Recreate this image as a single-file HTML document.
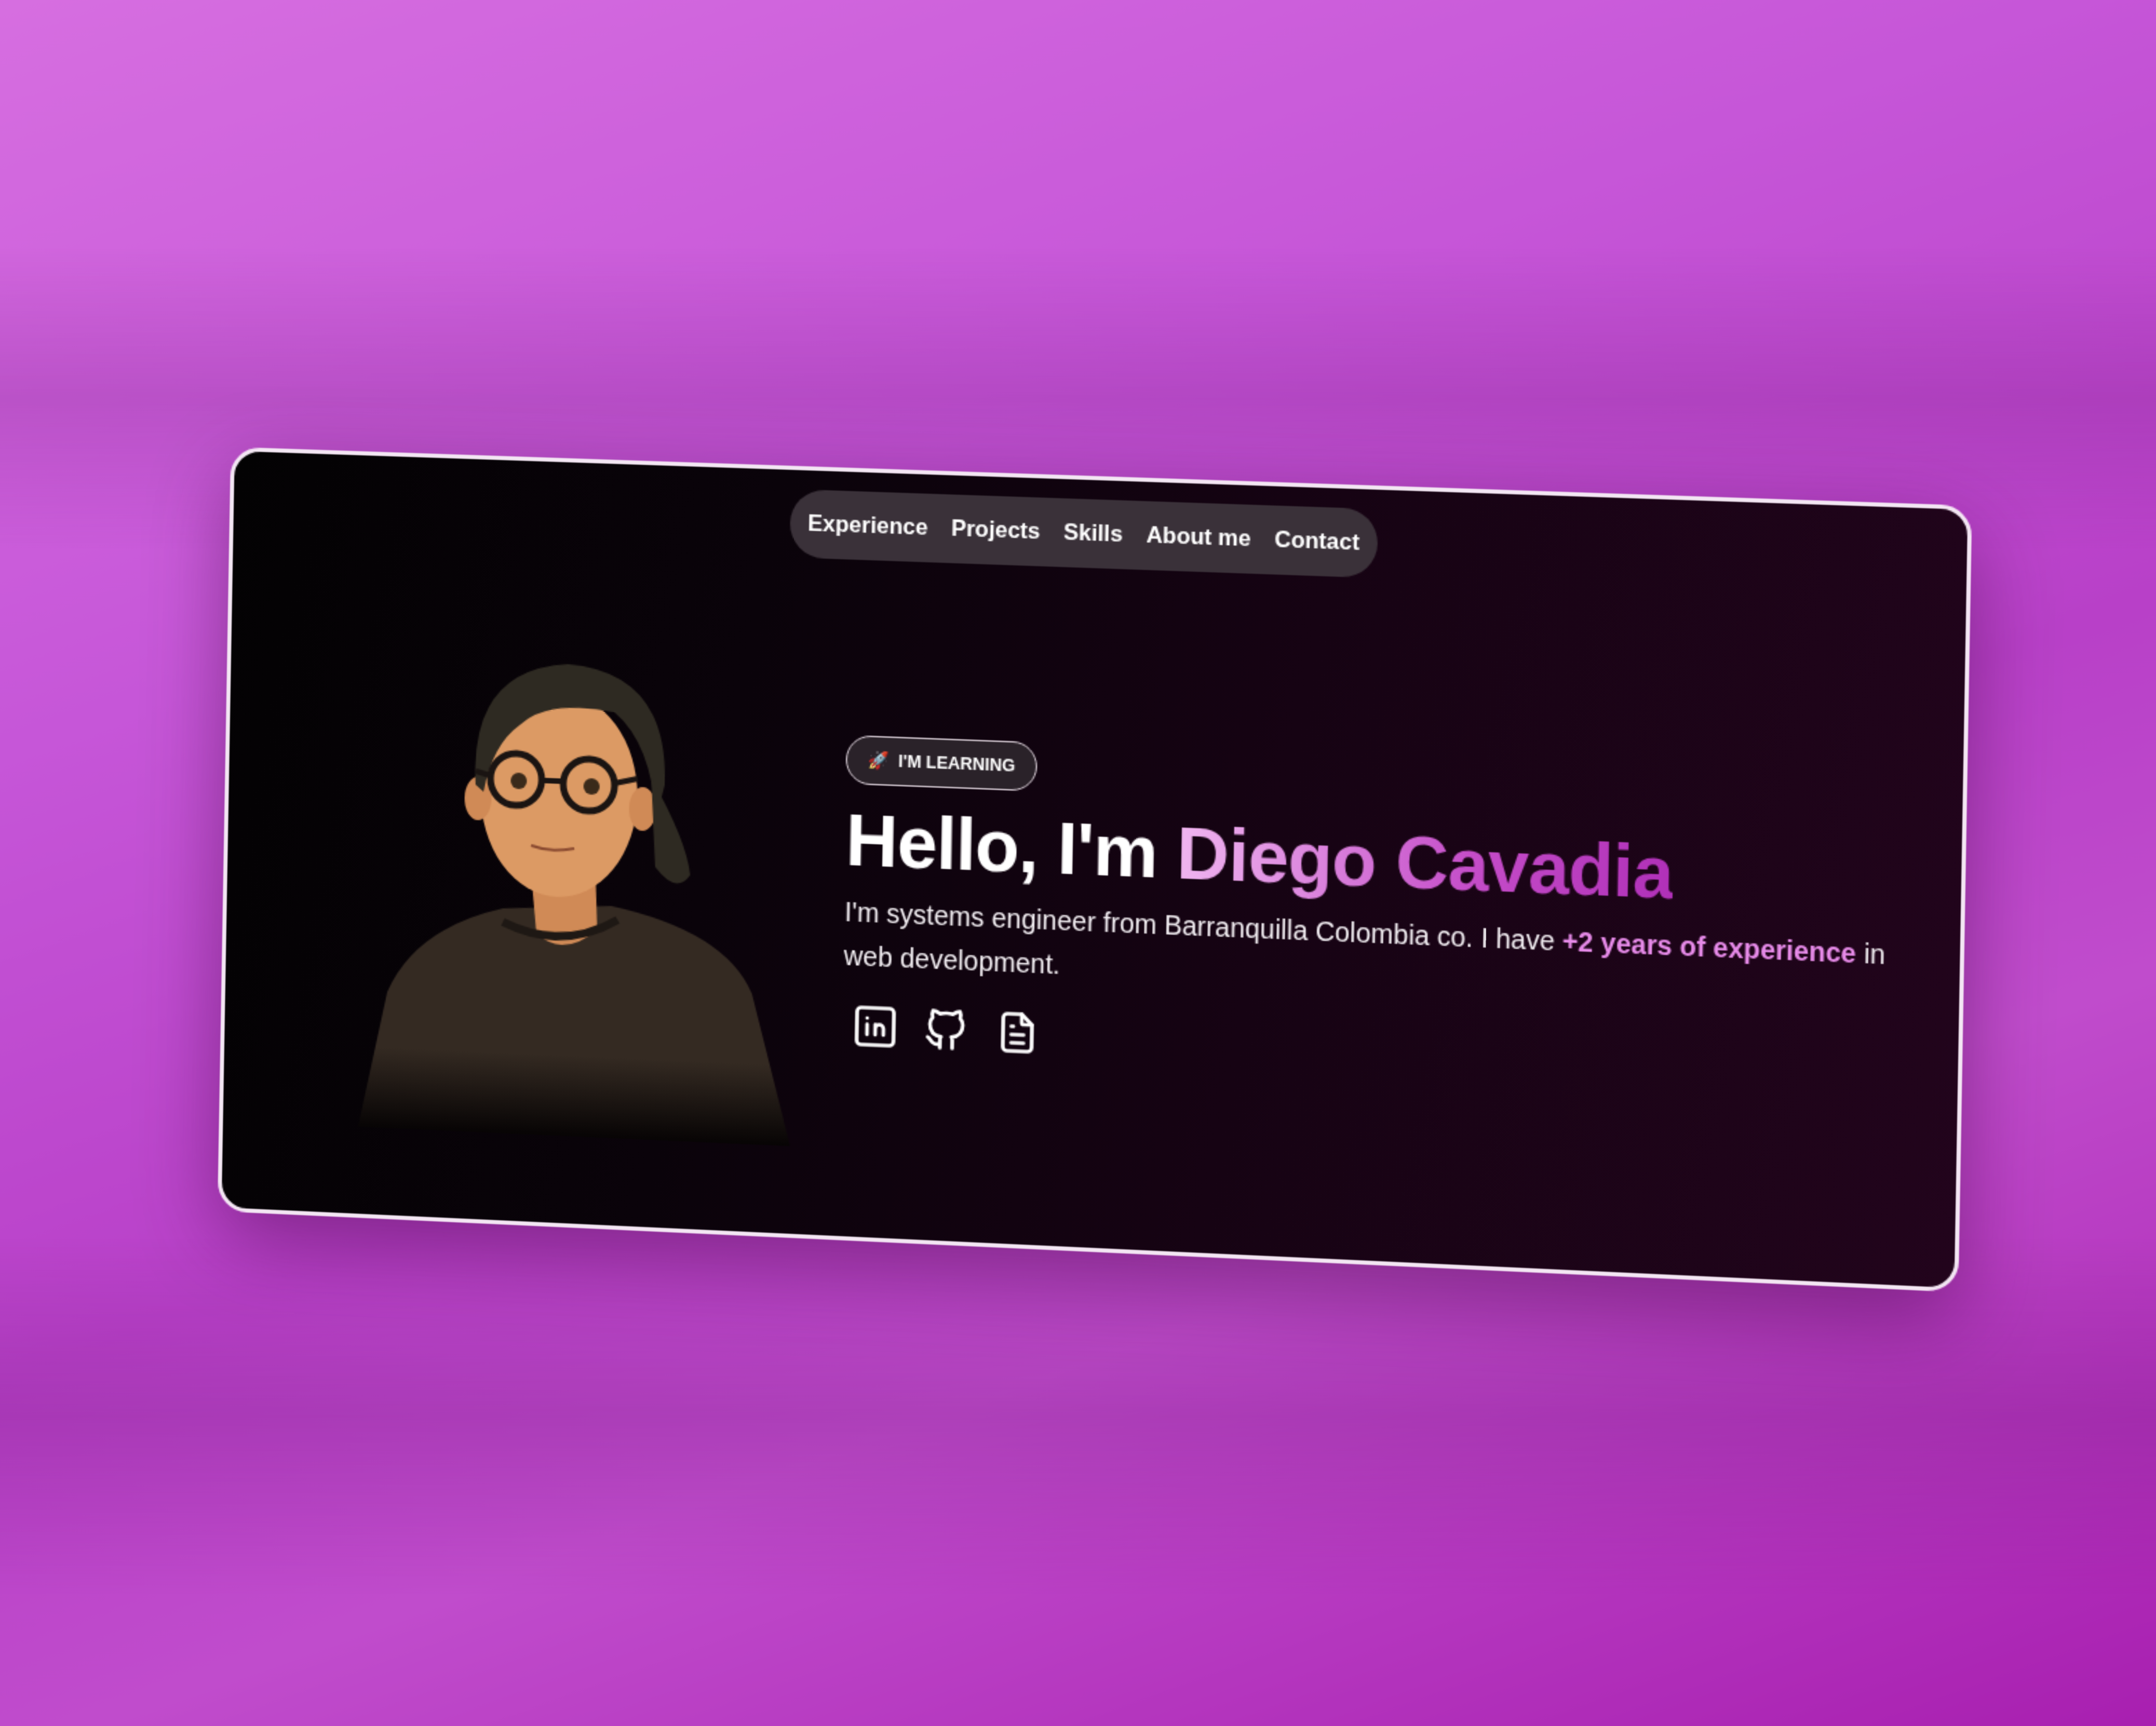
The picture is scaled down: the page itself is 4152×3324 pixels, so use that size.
<!DOCTYPE html>
<html><head><meta charset="utf-8">
<style>
html,body{margin:0;padding:0;width:4152px;height:3324px;overflow:hidden}
body{background:linear-gradient(160deg,#d66ee0 0%,#c656d8 30%,#b840c8 55%,#c04ccc 70%,#a81fb0 100%)}
#wrap{position:absolute;left:0;top:0;width:1568px;height:1255px;transform:scale(2.648);transform-origin:0 0;font-family:"Liberation Sans",sans-serif}
.band{position:absolute;left:0;width:1568px}
#card{position:absolute;left:153px;top:346px;width:1268px;height:564px;transform:perspective(2000px) rotate(1deg) skewY(1.3deg) rotateY(-2.6deg);border:3px solid #f3e6f3;border-radius:22px;box-sizing:border-box;overflow:hidden;
background:linear-gradient(100deg,#030203 0%,#0a030a 30%,#160313 60%,#22041c 100%);box-shadow:0 20px 60px rgba(60,0,60,.45)}
#nav{position:absolute;left:413px;top:14px;width:428px;height:50px;border-radius:25px;background:#3a3139;color:#fff;font-size:16.5px;font-weight:bold;display:flex;align-items:center;justify-content:center;gap:17px;white-space:nowrap}
#badge{position:absolute;left:457px;top:192px;width:140px;height:36px;border-radius:18px;border:1.5px solid #d8cdd6;background:#2a2229;color:#fff;font-size:12.5px;font-weight:bold;display:flex;align-items:center;justify-content:center;box-sizing:border-box}
#h{position:absolute;left:458px;top:239px;font-size:53px;font-weight:bold;color:#fff;white-space:nowrap;letter-spacing:-0.6px}
#p{position:absolute;left:458px;top:306px;width:760px;font-size:19.5px;line-height:32px;color:#f2eef2}
.icons{position:absolute;left:464px;top:386px;display:flex;gap:16px}
</style></head><body>
<div id="wrap">
<div class="band" style="top:180px;height:220px;background:linear-gradient(180deg,rgba(120,30,130,0),rgba(120,30,130,.22),rgba(120,30,130,0))"></div>
<div class="band" style="top:900px;height:260px;background:linear-gradient(180deg,rgba(120,30,130,0),rgba(120,30,130,.25),rgba(120,30,130,0))"></div>
<div id="card">
 <div id="nav"><span>Experience</span><span>Projects</span><span>Skills</span><span>About me</span><span>Contact</span></div>
 <svg style="position:absolute;left:86px;top:134px" width="350" height="370" viewBox="0 0 350 370">
  <defs><linearGradient id="fade" x1="0" y1="0" x2="0" y2="1"><stop offset="0.65" stop-color="#342a22"/><stop offset="1" stop-color="#070404"/></linearGradient></defs>
  <path d="M15 360 L35 260 Q55 212 120 195 L200 190 Q285 205 305 250 L335 360 Z" fill="url(#fade)"/>
  <path d="M140 165 L145 212 Q165 230 190 208 L188 165 Z" fill="#d08a56"/>
  <path d="M120 205 Q165 225 205 200" stroke="#1e1814" stroke-width="6" fill="none"/>
  <ellipse cx="160" cy="110" rx="58" ry="75" fill="#dc9a64"/>
  <ellipse cx="100" cy="115" rx="10" ry="16" fill="#d08a56"/>
  <ellipse cx="222" cy="118" rx="10" ry="16" fill="#d08a56"/>
  <path d="M98 105 Q92 20 165 14 Q240 18 238 100 L232 125 Q228 70 200 48 Q150 40 130 60 Q110 75 104 110 Z" fill="#2e2a22"/>
  <path d="M228 95 Q255 140 258 165 Q248 180 232 160 Z" fill="#2e2a22"/>
  <circle cx="128" cy="100" r="19" fill="none" stroke="#1a1412" stroke-width="5"/>
  <circle cx="182" cy="102" r="19" fill="none" stroke="#1a1412" stroke-width="5"/>
  <path d="M147 100 L163 100 M109 98 L98 95 M201 100 L218 96" stroke="#1a1412" stroke-width="4"/>
  <circle cx="130" cy="101" r="6" fill="#3a2a1a"/><circle cx="184" cy="103" r="6" fill="#3a2a1a"/>
  <path d="M140 148 Q155 153 172 149" stroke="#8a4a30" stroke-width="2" fill="none"/>
 </svg>
 <div id="badge">🚀&nbsp; I'M LEARNING</div>
 <div id="h">Hello, I'm <span style="background:linear-gradient(90deg,#f0b6f0,#c44cc8 60%,#b030b8);-webkit-background-clip:text;color:transparent">Diego Cavadia</span></div>
 <div id="p">I'm systems engineer from Barranquilla Colombia co. I have <b style="color:#e68ae8">+2 years of experience</b> in web development.</div>
 <div class="icons">
  <svg width="36" height="36" viewBox="0 0 24 24" fill="none" stroke="#fff" stroke-width="1.8" stroke-linecap="round" stroke-linejoin="round"><rect x="3" y="3" width="18" height="18" rx="2"/><path d="M8 11v5M8 8v.01M12 16v-5M16 16v-3a2 2 0 0 0-4 0"/></svg>
  <svg width="36" height="36" viewBox="0 0 24 24" fill="none" stroke="#fff" stroke-width="1.8" stroke-linecap="round" stroke-linejoin="round"><path d="M9 19c-4.3 1.4-4.3-2.5-6-3m12 5v-3.5c0-1 .1-1.4-.5-2 2.8-.3 5.5-1.4 5.5-6a4.6 4.6 0 0 0-1.3-3.2 4.2 4.2 0 0 0-.1-3.2s-1.1-.3-3.5 1.3a12.3 12.3 0 0 0-6.2 0C6.5 2.8 5.4 3.1 5.4 3.1a4.2 4.2 0 0 0-.1 3.2A4.6 4.6 0 0 0 4 9.5c0 4.6 2.7 5.7 5.5 6-.6.6-.6 1.2-.5 2V21"/></svg>
  <svg width="36" height="36" viewBox="0 0 24 24" fill="none" stroke="#fff" stroke-width="1.8" stroke-linecap="round" stroke-linejoin="round"><path d="M14 3v4a1 1 0 0 0 1 1h4"/><path d="M17 21H7a2 2 0 0 1-2-2V5a2 2 0 0 1 2-2h7l5 5v11a2 2 0 0 1-2 2z"/><path d="M9 9h1M9 13h6M9 17h6"/></svg>
 </div>
</div>
</div>
</body></html>
